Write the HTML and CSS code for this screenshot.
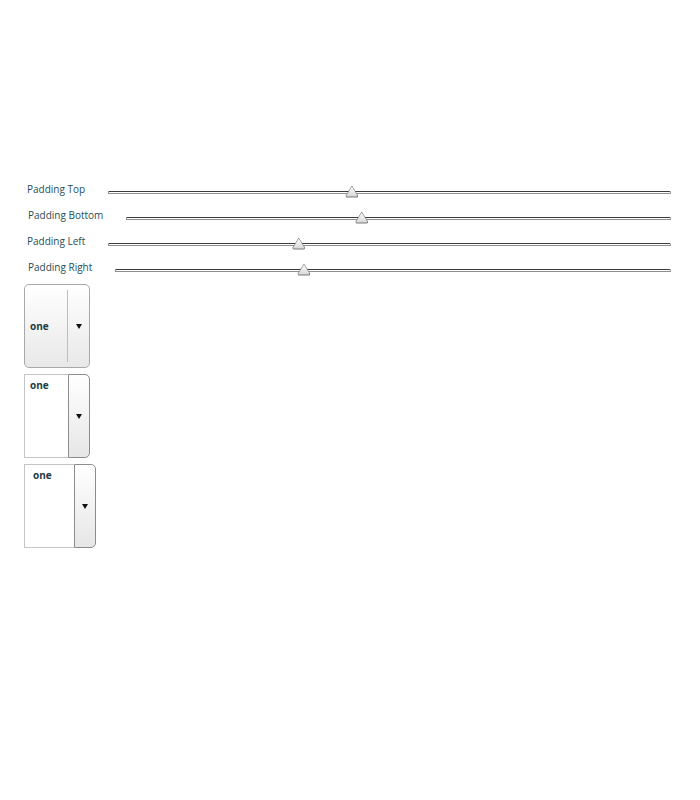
FILE: index.html
```html
<!DOCTYPE html>
<html>
<head>
<meta charset="utf-8">
<link rel="stylesheet" href="styles.css">
</head>
<body>
<div class="page">
  <div class="sliders">
    <div class="row"><span class="label">Padding Top</span><div class="track"><span class="thumb" style="left:43.2%"></span></div></div>
    <div class="row"><span class="label lb1">Padding Bottom</span><div class="track"><span class="thumb" style="left:43.1%"></span></div></div>
    <div class="row"><span class="label">Padding Left</span><div class="track"><span class="thumb" style="left:33.7%"></span></div></div>
    <div class="row"><span class="label lb1">Padding Right</span><div class="track"><span class="thumb" style="left:33.8%"></span></div></div>
  </div>
  <div class="selects">
    <div class="sel-combo">
      <span class="value">one</span>
      <span class="btn"><span class="arrow"></span></span>
    </div>
    <div class="sel-list">
      <div class="list"><span class="value">one</span></div>
      <span class="btn"><span class="arrow"></span></span>
    </div>
    <div class="sel-list wide">
      <div class="list"><span class="value">one</span></div>
      <span class="btn"><span class="arrow"></span></span>
    </div>
  </div>
</div>
</body>
</html>
```
FILE: styles.css
```css
html, body {
  margin: 0;
  padding: 0;
  background: #fff;
}
.page {
  padding: 177px 29px 0 24px;
  font-family: "Open Sans", "DejaVu Sans", sans-serif;
}
.sliders {
  display: flex;
  flex-direction: column;
}
.row {
  height: 26px;
  display: flex;
  align-items: center;
  gap: 23px;
}
.label {
  padding-left: 3px;
  font-size: 10px;
  color: #1f4d58;
  white-space: nowrap;
  position: relative;
  top: -1px;
}
.label.lb1 {
  padding-left: 4px;
}
.track {
  flex: 1;
  height: 1px;
  margin-top: 4px;
  border: 1px solid #8e8e8e;
  border-top-color: #3c3c3c;
  border-radius: 0 2px 2px 0;
  background: #fff;
  position: relative;
}
.thumb {
  position: absolute;
  top: -6px;
  width: 13px;
  height: 12px;
  margin-left: -6px;
  background: #7a7a7a;
  clip-path: polygon(50% 0, 100% 88%, 92% 100%, 8% 100%, 0 88%);
}
.thumb::after {
  content: "";
  position: absolute;
  inset: 1px;
  background: linear-gradient(#fafafa, #d6d6d6);
  clip-path: polygon(50% 0, 100% 90%, 100% 100%, 0 100%, 0 90%);
}
.selects {
  margin-top: 3px;
  display: flex;
  flex-direction: column;
  align-items: flex-start;
  gap: 6px;
}
.value {
  font-size: 10px;
  font-weight: 700;
  color: #1c3d45;
}
.sel-combo {
  width: 64px;
  height: 82px;
  border: 1px solid #a8a8a8;
  border-radius: 5px;
  background: linear-gradient(#ffffff, #e8e8e8);
  display: flex;
  align-items: center;
}
.sel-combo .value {
  flex: 1;
  padding-left: 5px;
}
.sel-combo .btn {
  width: 21px;
  height: 72px;
  border-left: 1px solid #bdbdbd;
  display: flex;
  align-items: center;
  justify-content: center;
}
.arrow {
  width: 0;
  height: 0;
  border-left: 3.5px solid transparent;
  border-right: 3.5px solid transparent;
  border-top: 5px solid #111;
}
.sel-list {
  display: flex;
  height: 84px;
}
.sel-list .list {
  border: 1px solid #c4c4c4;
  border-right: none;
  background: #fff;
  padding: 1px 0 0 5px;
  box-sizing: border-box;
  width: 44px;
  line-height: 14px;
}
.sel-list .btn {
  width: 22px;
  box-sizing: border-box;
  border: 1px solid #8c8c8c;
  border-radius: 0 5px 5px 0;
  background: linear-gradient(#ffffff, #e6e6e6);
  display: flex;
  align-items: center;
  justify-content: center;
}
.sel-list.wide .list {
  width: 50px;
  padding-left: 8px;
}
```
